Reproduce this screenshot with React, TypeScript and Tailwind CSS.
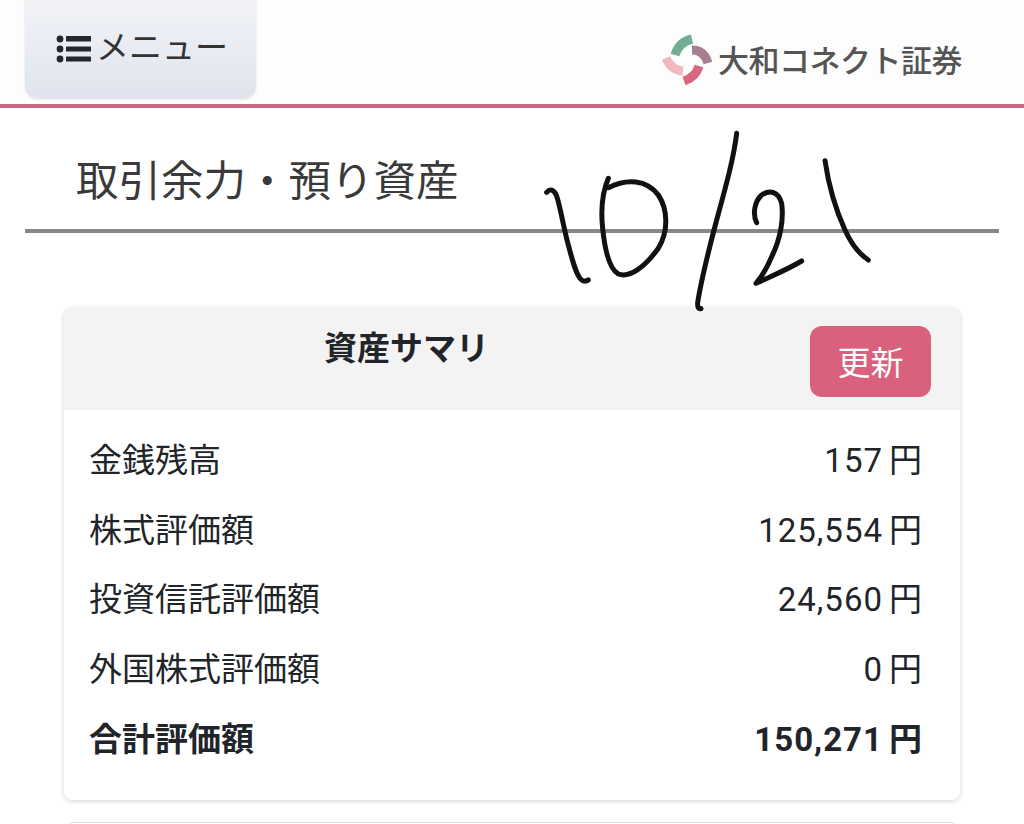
const rows = [
  { label: "金銭残高", value: "157" },
  { label: "株式評価額", value: "125,554" },
  { label: "投資信託評価額", value: "24,560" },
  { label: "外国株式評価額", value: "0" },
];

function MenuIcon() {
  return (
    <svg width="36" height="28" viewBox="0 0 36 28" fill="#22262e">
      <circle cx="4" cy="4" r="3.4" />
      <circle cx="4" cy="14" r="3.4" />
      <circle cx="4" cy="24" r="3.4" />
      <rect x="10" y="1" width="25" height="5.4" rx="0.6" />
      <rect x="10" y="11.4" width="25" height="5.2" rx="0.6" />
      <rect x="10" y="21.4" width="25" height="5.2" rx="0.6" />
    </svg>
  );
}

function LogoMark() {
  return (
    <svg width="56" height="56" viewBox="4 4 56 56" fill="none" strokeWidth="9" className="shrink-0 blur-[0.5px]">
      <path d="M20 27 Q24 14 37 11" stroke="#6fae94" />
      <path d="M37 22 Q49 22 53 35" stroke="#a67f92" />
      <path d="M11 30 Q16 42 28 43" stroke="#f2b8c0" />
      <path d="M44 38 Q41 49 29 53" stroke="#d9667c" />
    </svg>
  );
}

function Scribble() {
  return (
    <svg
      width="350"
      height="200"
      viewBox="0 0 1050 600"
      fill="none"
      stroke="#111"
      strokeWidth="15"
      strokeLinecap="round"
      strokeLinejoin="round"
      className="absolute left-[530px] top-[120px]"
    >
      <path d="M50 217 C60 205 72 208 80 228 C92 265 100 320 115 375 C128 425 140 470 155 480 C162 485 170 483 175 480" />
      <path d="M235 175 C218 215 212 270 218 325 C224 385 235 445 265 462 C300 475 345 440 385 385 C415 335 415 270 385 225 C350 178 290 175 235 203" />
      <path d="M620 40 C612 110 590 190 560 300 C535 395 515 470 503 548 C502 562 506 568 513 566" />
      <path d="M680 308 C668 285 672 245 695 225 C720 208 745 215 755 250 C762 300 750 360 725 410 C710 445 695 470 678 490 C720 470 770 450 815 423" />
      <path d="M885 122 C895 190 915 265 945 330 C965 375 985 400 1015 420" />
    </svg>
  );
}

export default function App() {
  return (
    <div className="relative h-[824px] w-full overflow-hidden bg-white font-['Roboto','Noto_Sans_CJK_JP',sans-serif] text-[#212529]">
      {/* Header */}
      <header className="flex h-[108px] items-start justify-between border-b-4 border-[#c96a80] bg-[#fdfdfd] pl-[25px] pr-[62px]">
        <button className="-mt-3 flex h-[110px] w-[231px] items-center gap-[4px] rounded-xl bg-gradient-to-b from-[#f4f5f8] to-[#dfe4ee] pl-[31px] pt-3 text-[33px] leading-none text-[#333] shadow-sm">
          <MenuIcon />
          <span className="-mt-1">メニュー</span>
        </button>
        <div className="mt-[32px] flex items-center gap-[3px]">
          <LogoMark />
          <span className="pt-[2px] text-[31px] font-medium leading-none tracking-[-0.5px] text-[#555]">大和コネクト証券</span>
        </div>
      </header>

      {/* Page title */}
      <div className="mx-[25px] flex h-[125px] items-end border-b-4 border-[#888] pb-[26px] pl-[51px] text-[42.5px] leading-none text-[#3a3a3a]">
        取引余力・預り資産
      </div>

      {/* Summary card */}
      <section className="mx-[64px] mt-[75px] h-[492px] rounded-lg bg-white shadow-[0_1px_5px_rgba(0,0,0,0.18)]">
        <div className="flex h-[102px] items-start rounded-t-lg bg-[#f3f3f4] pr-[29px] pt-[18px]">
          <h2 className="flex-1 pl-[260px] pt-1 text-[33px] font-bold leading-[38px]">資産サマリ</h2>
          <button className="h-[71px] w-[121px] rounded-xl bg-[#d9617e] pt-[3px] text-[33px] leading-none text-white">更新</button>
        </div>
        <div className="px-[25px] pt-4 pr-[38px]">
          {rows.map((r) => (
            <div key={r.label} className="flex h-[69.7px] items-center justify-between text-[33px]">
              <span>{r.label}</span>
              <span className="flex gap-[6px]">
                <span className="tracking-[1px]">{r.value}</span>
                <span>円</span>
              </span>
            </div>
          ))}
          <div className="flex h-[69.7px] items-center justify-between text-[33px] font-bold">
            <span>合計評価額</span>
            <span className="flex gap-[6px]">
              <span className="tracking-[1px]">150,271</span>
              <span>円</span>
            </span>
          </div>
        </div>
      </section>

      {/* Next card peeking in */}
      <div className="mx-[66px] mt-[22px] h-10 rounded-lg border-t border-[#ddd]" />

      <Scribble />
    </div>
  );
}
